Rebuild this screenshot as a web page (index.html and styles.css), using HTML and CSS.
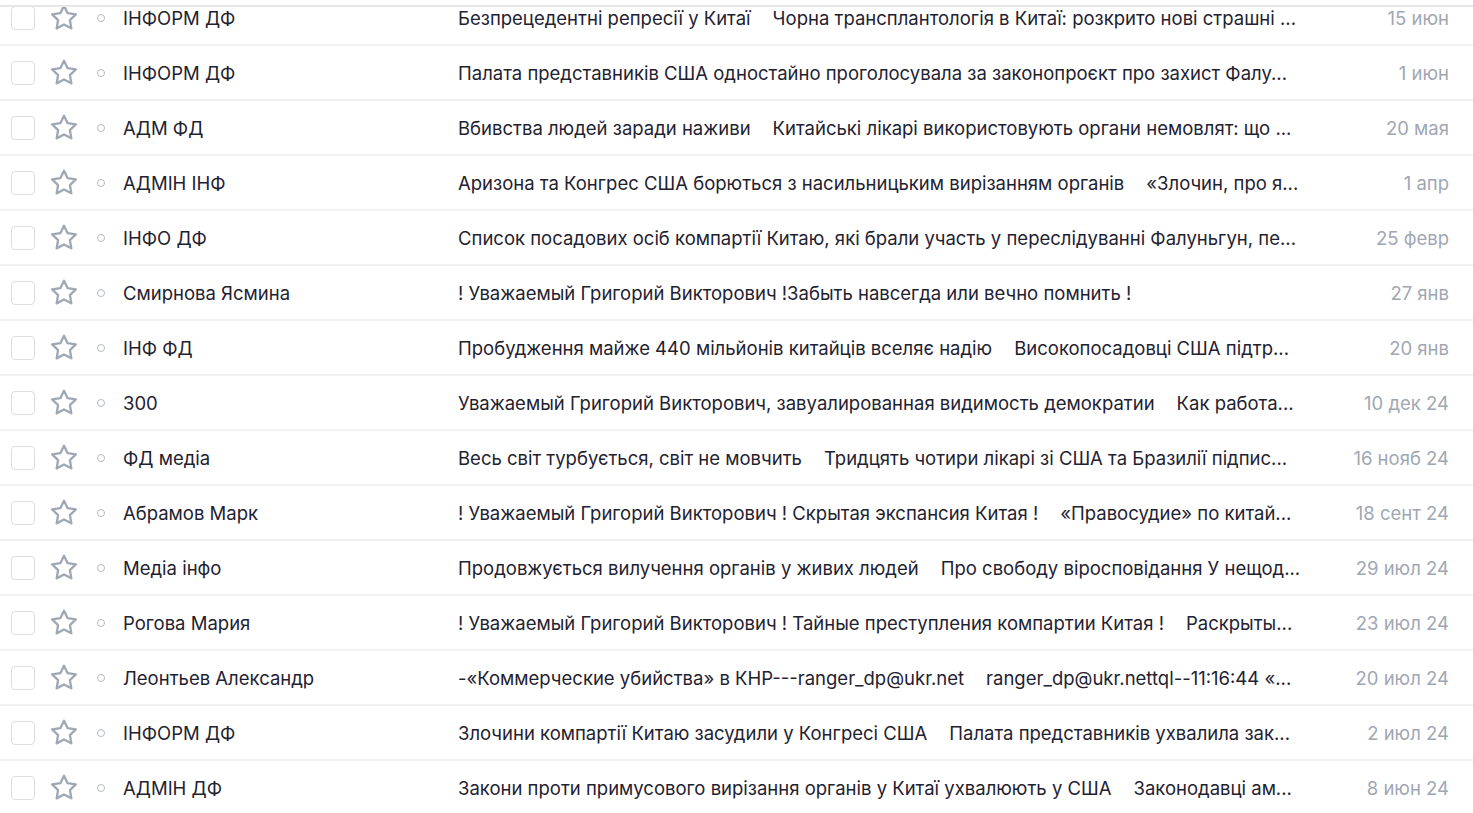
FILE: index.html
```html
<!DOCTYPE html>
<html lang="uk">
<head>
<meta charset="utf-8">
<title>Inbox</title>
<link rel="stylesheet" href="styles.css">
</head>
<body>
<div class="page">
  <div class="topbar"></div>
  <div class="list">
    <div class="row"><span class="cb"></span><svg class="star" viewBox="0 0 24 24"><path d="M12 2.8l2.75 5.6 6.15.9-4.45 4.33 1.05 6.12L12 16.86l-5.5 2.9 1.05-6.13L3.1 9.3l6.15-.9z"/></svg><span class="dot"></span><span class="from">ІНФОРМ ДФ</span><span class="text"><span class="subj">Безпрецедентні репресії у Китаї</span><span class="snip">Чорна трансплантологія в Китаї: розкрито нові страшні ...</span></span><span class="date">15 июн</span></div>
    <div class="row"><span class="cb"></span><svg class="star" viewBox="0 0 24 24"><path d="M12 2.8l2.75 5.6 6.15.9-4.45 4.33 1.05 6.12L12 16.86l-5.5 2.9 1.05-6.13L3.1 9.3l6.15-.9z"/></svg><span class="dot"></span><span class="from">ІНФОРМ ДФ</span><span class="text"><span class="subj">Палата представників США одностайно проголосувала за законопроєкт про захист Фалу...</span></span><span class="date">1 июн</span></div>
    <div class="row"><span class="cb"></span><svg class="star" viewBox="0 0 24 24"><path d="M12 2.8l2.75 5.6 6.15.9-4.45 4.33 1.05 6.12L12 16.86l-5.5 2.9 1.05-6.13L3.1 9.3l6.15-.9z"/></svg><span class="dot"></span><span class="from">АДМ ФД</span><span class="text"><span class="subj">Вбивства людей заради наживи</span><span class="snip">Китайські лікарі використовують органи немовлят: що ...</span></span><span class="date">20 мая</span></div>
    <div class="row"><span class="cb"></span><svg class="star" viewBox="0 0 24 24"><path d="M12 2.8l2.75 5.6 6.15.9-4.45 4.33 1.05 6.12L12 16.86l-5.5 2.9 1.05-6.13L3.1 9.3l6.15-.9z"/></svg><span class="dot"></span><span class="from">АДМІН ІНФ</span><span class="text"><span class="subj">Аризона та Конгрес США борються з насильницьким вирізанням органів</span><span class="snip">«Злочин, про я...</span></span><span class="date">1 апр</span></div>
    <div class="row"><span class="cb"></span><svg class="star" viewBox="0 0 24 24"><path d="M12 2.8l2.75 5.6 6.15.9-4.45 4.33 1.05 6.12L12 16.86l-5.5 2.9 1.05-6.13L3.1 9.3l6.15-.9z"/></svg><span class="dot"></span><span class="from">ІНФО ДФ</span><span class="text"><span class="subj">Список посадових осіб компартії Китаю, які брали участь у переслідуванні Фалуньгун, пе...</span></span><span class="date">25 февр</span></div>
    <div class="row"><span class="cb"></span><svg class="star" viewBox="0 0 24 24"><path d="M12 2.8l2.75 5.6 6.15.9-4.45 4.33 1.05 6.12L12 16.86l-5.5 2.9 1.05-6.13L3.1 9.3l6.15-.9z"/></svg><span class="dot"></span><span class="from">Смирнова Ясмина</span><span class="text"><span class="subj">! Уважаемый Григорий Викторович !Забыть навсегда или вечно помнить !</span></span><span class="date">27 янв</span></div>
    <div class="row"><span class="cb"></span><svg class="star" viewBox="0 0 24 24"><path d="M12 2.8l2.75 5.6 6.15.9-4.45 4.33 1.05 6.12L12 16.86l-5.5 2.9 1.05-6.13L3.1 9.3l6.15-.9z"/></svg><span class="dot"></span><span class="from">ІНФ ФД</span><span class="text"><span class="subj">Пробудження майже 440 мільйонів китайців вселяє надію</span><span class="snip">Високопосадовці США підтр...</span></span><span class="date">20 янв</span></div>
    <div class="row"><span class="cb"></span><svg class="star" viewBox="0 0 24 24"><path d="M12 2.8l2.75 5.6 6.15.9-4.45 4.33 1.05 6.12L12 16.86l-5.5 2.9 1.05-6.13L3.1 9.3l6.15-.9z"/></svg><span class="dot"></span><span class="from">300</span><span class="text"><span class="subj">Уважаемый Григорий Викторович, завуалированная видимость демократии</span><span class="snip">Как работа...</span></span><span class="date">10 дек 24</span></div>
    <div class="row"><span class="cb"></span><svg class="star" viewBox="0 0 24 24"><path d="M12 2.8l2.75 5.6 6.15.9-4.45 4.33 1.05 6.12L12 16.86l-5.5 2.9 1.05-6.13L3.1 9.3l6.15-.9z"/></svg><span class="dot"></span><span class="from">ФД медіа</span><span class="text"><span class="subj">Весь світ турбується, світ не мовчить</span><span class="snip">Тридцять чотири лікарі зі США та Бразилії підпис...</span></span><span class="date">16 нояб 24</span></div>
    <div class="row"><span class="cb"></span><svg class="star" viewBox="0 0 24 24"><path d="M12 2.8l2.75 5.6 6.15.9-4.45 4.33 1.05 6.12L12 16.86l-5.5 2.9 1.05-6.13L3.1 9.3l6.15-.9z"/></svg><span class="dot"></span><span class="from">Абрамов Марк</span><span class="text"><span class="subj">! Уважаемый Григорий Викторович ! Скрытая экспансия Китая !</span><span class="snip">«Правосудие» по китай...</span></span><span class="date">18 сент 24</span></div>
    <div class="row"><span class="cb"></span><svg class="star" viewBox="0 0 24 24"><path d="M12 2.8l2.75 5.6 6.15.9-4.45 4.33 1.05 6.12L12 16.86l-5.5 2.9 1.05-6.13L3.1 9.3l6.15-.9z"/></svg><span class="dot"></span><span class="from">Медіа інфо</span><span class="text"><span class="subj">Продовжується вилучення органів у живих людей</span><span class="snip">Про свободу віросповідання У нещод...</span></span><span class="date">29 июл 24</span></div>
    <div class="row"><span class="cb"></span><svg class="star" viewBox="0 0 24 24"><path d="M12 2.8l2.75 5.6 6.15.9-4.45 4.33 1.05 6.12L12 16.86l-5.5 2.9 1.05-6.13L3.1 9.3l6.15-.9z"/></svg><span class="dot"></span><span class="from">Рогова Мария</span><span class="text"><span class="subj">! Уважаемый Григорий Викторович ! Тайные преступления компартии Китая !</span><span class="snip">Раскрыты...</span></span><span class="date">23 июл 24</span></div>
    <div class="row"><span class="cb"></span><svg class="star" viewBox="0 0 24 24"><path d="M12 2.8l2.75 5.6 6.15.9-4.45 4.33 1.05 6.12L12 16.86l-5.5 2.9 1.05-6.13L3.1 9.3l6.15-.9z"/></svg><span class="dot"></span><span class="from">Леонтьев Александр</span><span class="text"><span class="subj">-«Коммерческие убийства» в КНР---ranger_dp@ukr.net</span><span class="snip">ranger_dp@ukr.nettql--11:16:44 «...</span></span><span class="date">20 июл 24</span></div>
    <div class="row"><span class="cb"></span><svg class="star" viewBox="0 0 24 24"><path d="M12 2.8l2.75 5.6 6.15.9-4.45 4.33 1.05 6.12L12 16.86l-5.5 2.9 1.05-6.13L3.1 9.3l6.15-.9z"/></svg><span class="dot"></span><span class="from">ІНФОРМ ДФ</span><span class="text"><span class="subj">Злочини компартії Китаю засудили у Конгресі США</span><span class="snip">Палата представників ухвалила зак...</span></span><span class="date">2 июл 24</span></div>
    <div class="row"><span class="cb"></span><svg class="star" viewBox="0 0 24 24"><path d="M12 2.8l2.75 5.6 6.15.9-4.45 4.33 1.05 6.12L12 16.86l-5.5 2.9 1.05-6.13L3.1 9.3l6.15-.9z"/></svg><span class="dot"></span><span class="from">АДМІН ДФ</span><span class="text"><span class="subj">Закони проти примусового вирізання органів у Китаї ухвалюють у США</span><span class="snip">Законодавці ам...</span></span><span class="date">8 июн 24</span></div>
  </div>
</div>
</body>
</html>
```

FILE: styles.css
```css
html, body {
  margin: 0;
  padding: 0;
  background: #fff;
}
body {
  font-family: Inter, "Noto Sans", sans-serif;
  font-size: 18.5px;
  color: #1f2230;
}
.page {
  height: 813px;
  overflow: hidden;
}
.topbar {
  position: relative;
  z-index: 2;
  height: 5px;
  background: #fff;
  border-bottom: 2px solid #e6e6ec;
}
.list {
  margin-top: -16px;
}
.row {
  display: flex;
  align-items: center;
  height: 53px;
  border-bottom: 2px solid #f2f2f4;
  padding-left: 11px;
  white-space: nowrap;
}
.cb {
  flex: none;
  width: 22px;
  height: 22px;
  border: 1.5px solid #dcdde2;
  border-radius: 4px;
  box-sizing: content-box;
}
.star {
  flex: none;
  width: 32px;
  height: 32px;
  margin-left: 13px;
  fill: none;
  stroke: #a0a8b3;
  stroke-width: 1.75;
  stroke-linejoin: round;
}
.dot {
  flex: none;
  width: 6px;
  height: 6px;
  border: 1.2px solid #b4b9c1;
  border-radius: 50%;
  margin-left: 17px;
}
.from {
  flex: none;
  width: 335px;
  margin-left: 18px;
  overflow: hidden;
  text-overflow: ellipsis;
}
.text {
  flex: 1;
  min-width: 0;
  overflow: hidden;
  text-overflow: ellipsis;
}
.snip {
  margin-left: 22px;
}
.date {
  flex: none;
  width: 130px;
  text-align: right;
  padding-right: 24px;
  color: #a0a7b3;
}
```
